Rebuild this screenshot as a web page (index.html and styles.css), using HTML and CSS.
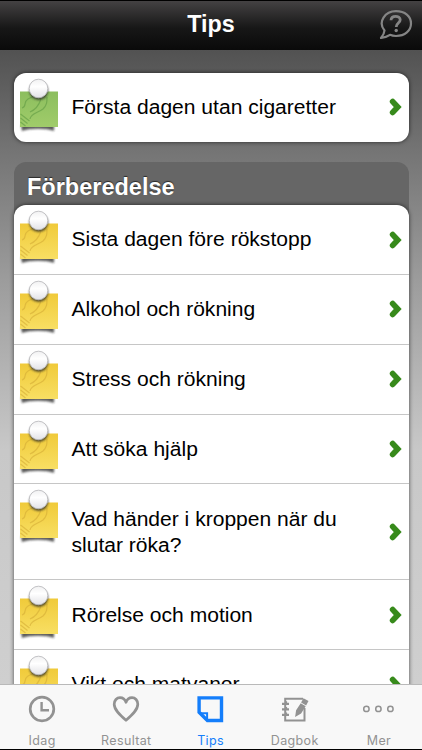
FILE: index.html
```html
<!DOCTYPE html>
<html lang="sv">
<head>
	<meta charset="utf-8">
	<title>Tips</title>
	<link rel="stylesheet" href="styles.css">
</head>
<body>

	<!-- shared icons -->
	<svg class="defs" width="0" height="0">
		<defs>
			<linearGradient id="gYellow" x1="0" y1="0" x2="0" y2="1">
				<stop offset="0" stop-color="#f0ca3a"/>
				<stop offset="1" stop-color="#f8df63"/>
			</linearGradient>
			<linearGradient id="gGreen" x1="0" y1="0" x2="0" y2="1">
				<stop offset="0" stop-color="#8cbe5e"/>
				<stop offset="1" stop-color="#a0cc6a"/>
			</linearGradient>
			<linearGradient id="gPin" x1="0" y1="0" x2="0" y2="1">
				<stop offset="0" stop-color="#f1f1f2"/>
				<stop offset="0.4" stop-color="#fff"/>
				<stop offset="1" stop-color="#e2e2e6"/>
			</linearGradient>
			<filter id="soft" x="-30%" y="-60%" width="160%" height="240%">
				<feGaussianBlur stdDeviation="1"/>
			</filter>
		</defs>
		<symbol id="hand" viewBox="0 0 40 60">
			<path d="M1.500 41l9 7M1.500 45l7 5.500M1.500 49l5 4M3 35c5-1 1-6 6-9l8-4M11 46c1-6 8-6 13-10 4-4 4-7 4-12M11 39c5-2 9-7 11-13" fill="none" stroke-width="1.200" opacity="0.6"/>
		</symbol>
		<symbol id="pin" viewBox="0 0 40 60">
			<circle cx="19.700" cy="17.600" r="9.500" fill="#222" opacity="0.75" filter="url(#soft)"/>
			<circle cx="19.500" cy="15.500" r="9.300" fill="url(#gPin)" stroke="#bcbcbf" stroke-width="0.900"/>
		</symbol>
		<symbol id="shade" viewBox="0 0 40 60">
			<path d="M2 52h33l0 6c-8-3-24-3-32 0z" fill="#222" opacity="0.75" filter="url(#soft)"/>
		</symbol>
		<symbol id="yellow" viewBox="0 0 40 60">
			<use href="#shade"/>
			<path d="M1 18.500h38V54H1z" fill="url(#gYellow)"/>
			<use href="#hand" stroke="#d3ab35"/>
			<use href="#pin"/>
		</symbol>
		<symbol id="green" viewBox="0 0 40 60">
			<use href="#shade"/>
			<path d="M1 18.500h38V54H1z" fill="url(#gGreen)"/>
			<use href="#hand" stroke="#5f9a43"/>
			<use href="#pin"/>
		</symbol>
		<symbol id="arrow" viewBox="0 0 14 18">
			<path d="M3.700 3.600L8.700 9l-5 5.400" fill="none" stroke="#378a1b" stroke-width="5.800" stroke-linecap="round"/>
		</symbol>
	</svg>

	<div class="header">
		<h1>Tips</h1>
		<svg class="help" width="36" height="32" viewBox="0 0 36 32" fill="none" stroke="#858585" stroke-width="2.200">
			<path d="M6.500 21.500C-.5 13 7 2.200 18 2.200c9 0 15 5.200 15 12.300S27 27 18 27c-2.300 0-4.300-.4-6-1.200-2.500 1.700-5 2.600-9 3.200 2-2.500 3.300-4.500 3.500-7.500z" stroke-linejoin="round"/>
			<path d="M13 11.200c.2-5.200 9.200-5 9.200-.4 0 3.300-4 3.300-4 7.200" stroke-width="2.800"/>
			<circle cx="18.200" cy="21.500" r="1.700" fill="#858585" stroke="none"/>
		</svg>
	</div>

	<div class="content">
		<ul class="list">
			<li>
				<svg class="note"><use href="#green"/></svg>
				<span>Första dagen utan cigaretter</span>
				<svg class="arrow"><use href="#arrow"/></svg>
			</li>
		</ul>

		<div class="group">
			<h2>Förberedelse</h2>
			<ul class="list">
				<li>
					<svg class="note"><use href="#yellow"/></svg>
					<span>Sista dagen före rökstopp</span>
					<svg class="arrow"><use href="#arrow"/></svg>
				</li>
				<li>
					<svg class="note"><use href="#yellow"/></svg>
					<span>Alkohol och rökning</span>
					<svg class="arrow"><use href="#arrow"/></svg>
				</li>
				<li>
					<svg class="note"><use href="#yellow"/></svg>
					<span>Stress och rökning</span>
					<svg class="arrow"><use href="#arrow"/></svg>
				</li>
				<li>
					<svg class="note"><use href="#yellow"/></svg>
					<span>Att söka hjälp</span>
					<svg class="arrow"><use href="#arrow"/></svg>
				</li>
				<li>
					<svg class="note"><use href="#yellow"/></svg>
					<span>Vad händer i kroppen när du slutar röka?</span>
					<svg class="arrow"><use href="#arrow"/></svg>
				</li>
				<li>
					<svg class="note"><use href="#yellow"/></svg>
					<span>Rörelse och motion</span>
					<svg class="arrow"><use href="#arrow"/></svg>
				</li>
				<li>
					<svg class="note"><use href="#yellow"/></svg>
					<span>Vikt och matvanor</span>
					<svg class="arrow"><use href="#arrow"/></svg>
				</li>
			</ul>
		</div>
	</div>

	<div class="tabs">
		<div class="tab">
			<svg width="32" height="30" viewBox="0 0 32 30" fill="none" stroke="#929292">
				<circle cx="16" cy="15" r="11.800" stroke-width="2.700"/>
				<path d="M15.600 8v8.300h7.400" stroke-width="2.400"/>
			</svg>
			<span>Idag</span>
		</div>
		<div class="tab">
			<svg width="32" height="30" viewBox="0 0 32 30" fill="none" stroke="#929292">
				<path d="M16 26.300C10.500 21.500 4.200 16 4.200 10.200 4.200 6.500 6.800 3.600 10 3.600c2.800 0 5 1.700 6 4.700 1-3 3.200-4.700 6-4.700 3.200 0 5.800 2.900 5.800 6.600 0 5.800-6.300 11.300-11.800 16.100z" stroke-width="2.700" stroke-linejoin="round"/>
			</svg>
			<span>Resultat</span>
		</div>
		<div class="tab active">
			<svg width="32" height="30" viewBox="0 0 32 30" fill="none" stroke="#147efb">
				<path d="M4.100 3.900h22.400v22.600H12.400l-8.300-8.300z" stroke-width="3.400"/>
				<path d="M4.600 19.200h7.500V27" stroke-width="2"/>
			</svg>
			<span>Tips</span>
		</div>
		<div class="tab">
			<svg width="32" height="30" viewBox="0 0 32 30" fill="none" stroke="#929292">
				<path d="M25.500 14v12.500H6.200V4.800H24" stroke-width="2"/>
				<path d="M3 9.800h7M3 15.300h7M3 20.800h7" stroke-width="2.200"/>
				<path d="M7.300 7.300v3M7.300 13v3M7.300 18.500v3" stroke-width="1.600"/>
				<path d="M24.500 4.200l5 2.800-2.400 4.600-5-3zM21.700 9.300l5 3-4.600 7.200-6 3.400 1-6.700z" fill="#929292" stroke="none"/>
			</svg>
			<span>Dagbok</span>
		</div>
		<div class="tab">
			<svg width="32" height="30" viewBox="0 0 32 30" fill="none" stroke="#929292" stroke-width="1.500">
				<circle cx="3.400" cy="14.900" r="2.700"/>
				<circle cx="15.400" cy="14.900" r="2.700"/>
				<circle cx="27.400" cy="14.900" r="2.700"/>
			</svg>
			<span>Mer</span>
		</div>
	</div>

</body>
</html>
```

FILE: styles.css
```css
* {
	box-sizing: border-box;
}
body {
	margin: 0;
	height: 750px;
	display: flex;
	flex-direction: column;
	overflow: hidden;
	background: #0b0b0b;
	font-family: "Liberation Sans", Arial, sans-serif;
}
h1, h2, ul {
	margin: 0;
	padding: 0;
}
.defs {
	position: absolute;
}

.header {
	flex: none;
	height: 50px;
	padding: 0 8px;
	display: grid;
	grid-template-columns: 36px 1fr 36px;
	align-items: center;
	border-top: 1px solid #000;
	background: linear-gradient(#444243, #171717 55%, #0a0a0a);
}
.header h1 {
	grid-column: 2;
	padding-bottom: 4px;
	text-align: center;
	font-size: 23.3px;
	line-height: 28px;
	color: #fff;
}
.header .help {
	margin-bottom: 2px;
}

.content {
	flex: 1;
	min-height: 0;
	overflow: hidden;
	padding: 23px 13.5px 0 13.5px;
	background: linear-gradient(#525252 0, #747474 100px, #9c9c9c 230px, #c8c8c8 400px, #cfcfcf);
}
.list {
	list-style: none;
	background: #fff;
	border-radius: 12px;
	box-shadow: 0 0 4px rgba(0, 0, 0, 0.65);
}
.list li {
	display: flex;
	align-items: center;
	min-height: 69.8px;
	padding: 0 6px 0 5.5px;
	border-bottom: 1px solid #c6c6c6;
}
.list li:last-child {
	min-height: 68.8px;
	border-bottom: 0;
}
.list span {
	flex: 1;
	padding: 21.2px 30px 21.2px 12.5px;
	font-size: 21.05px;
	line-height: 26.3px;
	color: #000;
}
.note {
	flex: none;
	align-self: flex-start;
	width: 40px;
	height: 60px;
}
.arrow {
	flex: none;
	width: 14px;
	height: 18px;
}

.group {
	margin-top: 20px;
	border-radius: 12px;
	background: #666;
}
.group h2 {
	height: 43.4px;
	padding: 3px 0 0 13.5px;
	font-size: 23.5px;
	line-height: 44px;
	color: #fff;
	text-shadow: 0 -1px 1px rgba(0, 0, 0, 0.6);
}

.tabs {
	flex: none;
	display: flex;
	height: 66px;
	padding-right: 1px;
	border-top: 1px solid #b9b9b9;
	border-bottom: 1px solid #000;
	background: #f8f8f8;
}
.tab {
	flex: 1;
	display: flex;
	flex-direction: column;
	align-items: center;
	padding-top: 9px;
	font-family: Inter, sans-serif;
	font-size: 12.5px;
	line-height: 16px;
	letter-spacing: 0.35px;
	color: #929292;
}
.tab svg {
	margin-bottom: 9px;
}
.tab.active {
	color: #147efb;
}
```
